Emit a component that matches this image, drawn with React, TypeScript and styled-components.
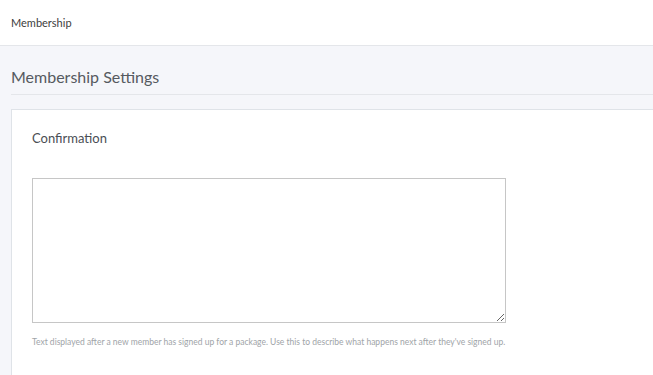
import React from "react";
import styled, { createGlobalStyle } from "styled-components";

const Global = createGlobalStyle`
  html, body { margin: 0; padding: 0; }
  body {
    font-family: Lato, "Noto Sans", sans-serif;
    background: #f5f6fa;
  }
`;

const Page = styled.div`
  width: 653px;
  height: 375px;
  overflow: hidden;
  background: #f5f6fa;
`;

const TopBar = styled.header`
  height: 45px;
  background: #ffffff;
  border-bottom: 1px solid #e4e6ea;
  display: flex;
  align-items: center;
  padding-left: 11px;
`;

const Crumb = styled.span`
  font-size: 11px;
  color: #3d3d3d;
`;

const Main = styled.main`
  padding-left: 11px;
  margin-right: -30px;
`;

const Heading = styled.h1`
  margin: 0;
  padding: 21px 0 7px;
  font-size: 16px;
  line-height: 20px;
  font-weight: 400;
  color: #555a60;
  border-bottom: 1px solid #e4e6ea;
`;

const Card = styled.section`
  margin-top: 14px;
  background: #ffffff;
  border: 1px solid #dfe3e8;
  padding: 20px 20px 40px;
`;

const Label = styled.label`
  display: block;
  font-size: 13px;
  line-height: 16px;
  color: #4a4e54;
`;

const TextArea = styled.textarea`
  display: block;
  box-sizing: border-box;
  margin-top: 32px;
  width: 474px;
  height: 145px;
  border: 1px solid #c6c6c6;
  border-radius: 0;
  background: #fff;
  font-family: inherit;
  resize: both;
  outline: none;
`;

const Help = styled.p`
  margin: 14px 0 0;
  font-size: 8.5px;
  line-height: 10px;
  color: #a0a4a8;
`;

export default function App() {
  return (
    <Page>
      <Global />
      <TopBar>
        <Crumb>Membership</Crumb>
      </TopBar>
      <Main>
        <Heading>Membership Settings</Heading>
        <Card>
          <Label htmlFor="confirmation">Confirmation</Label>
          <TextArea id="confirmation" />
          <Help>
            Text displayed after a new member has signed up for a package. Use this to describe what happens next after they've signed up.
          </Help>
        </Card>
      </Main>
    </Page>
  );
}
